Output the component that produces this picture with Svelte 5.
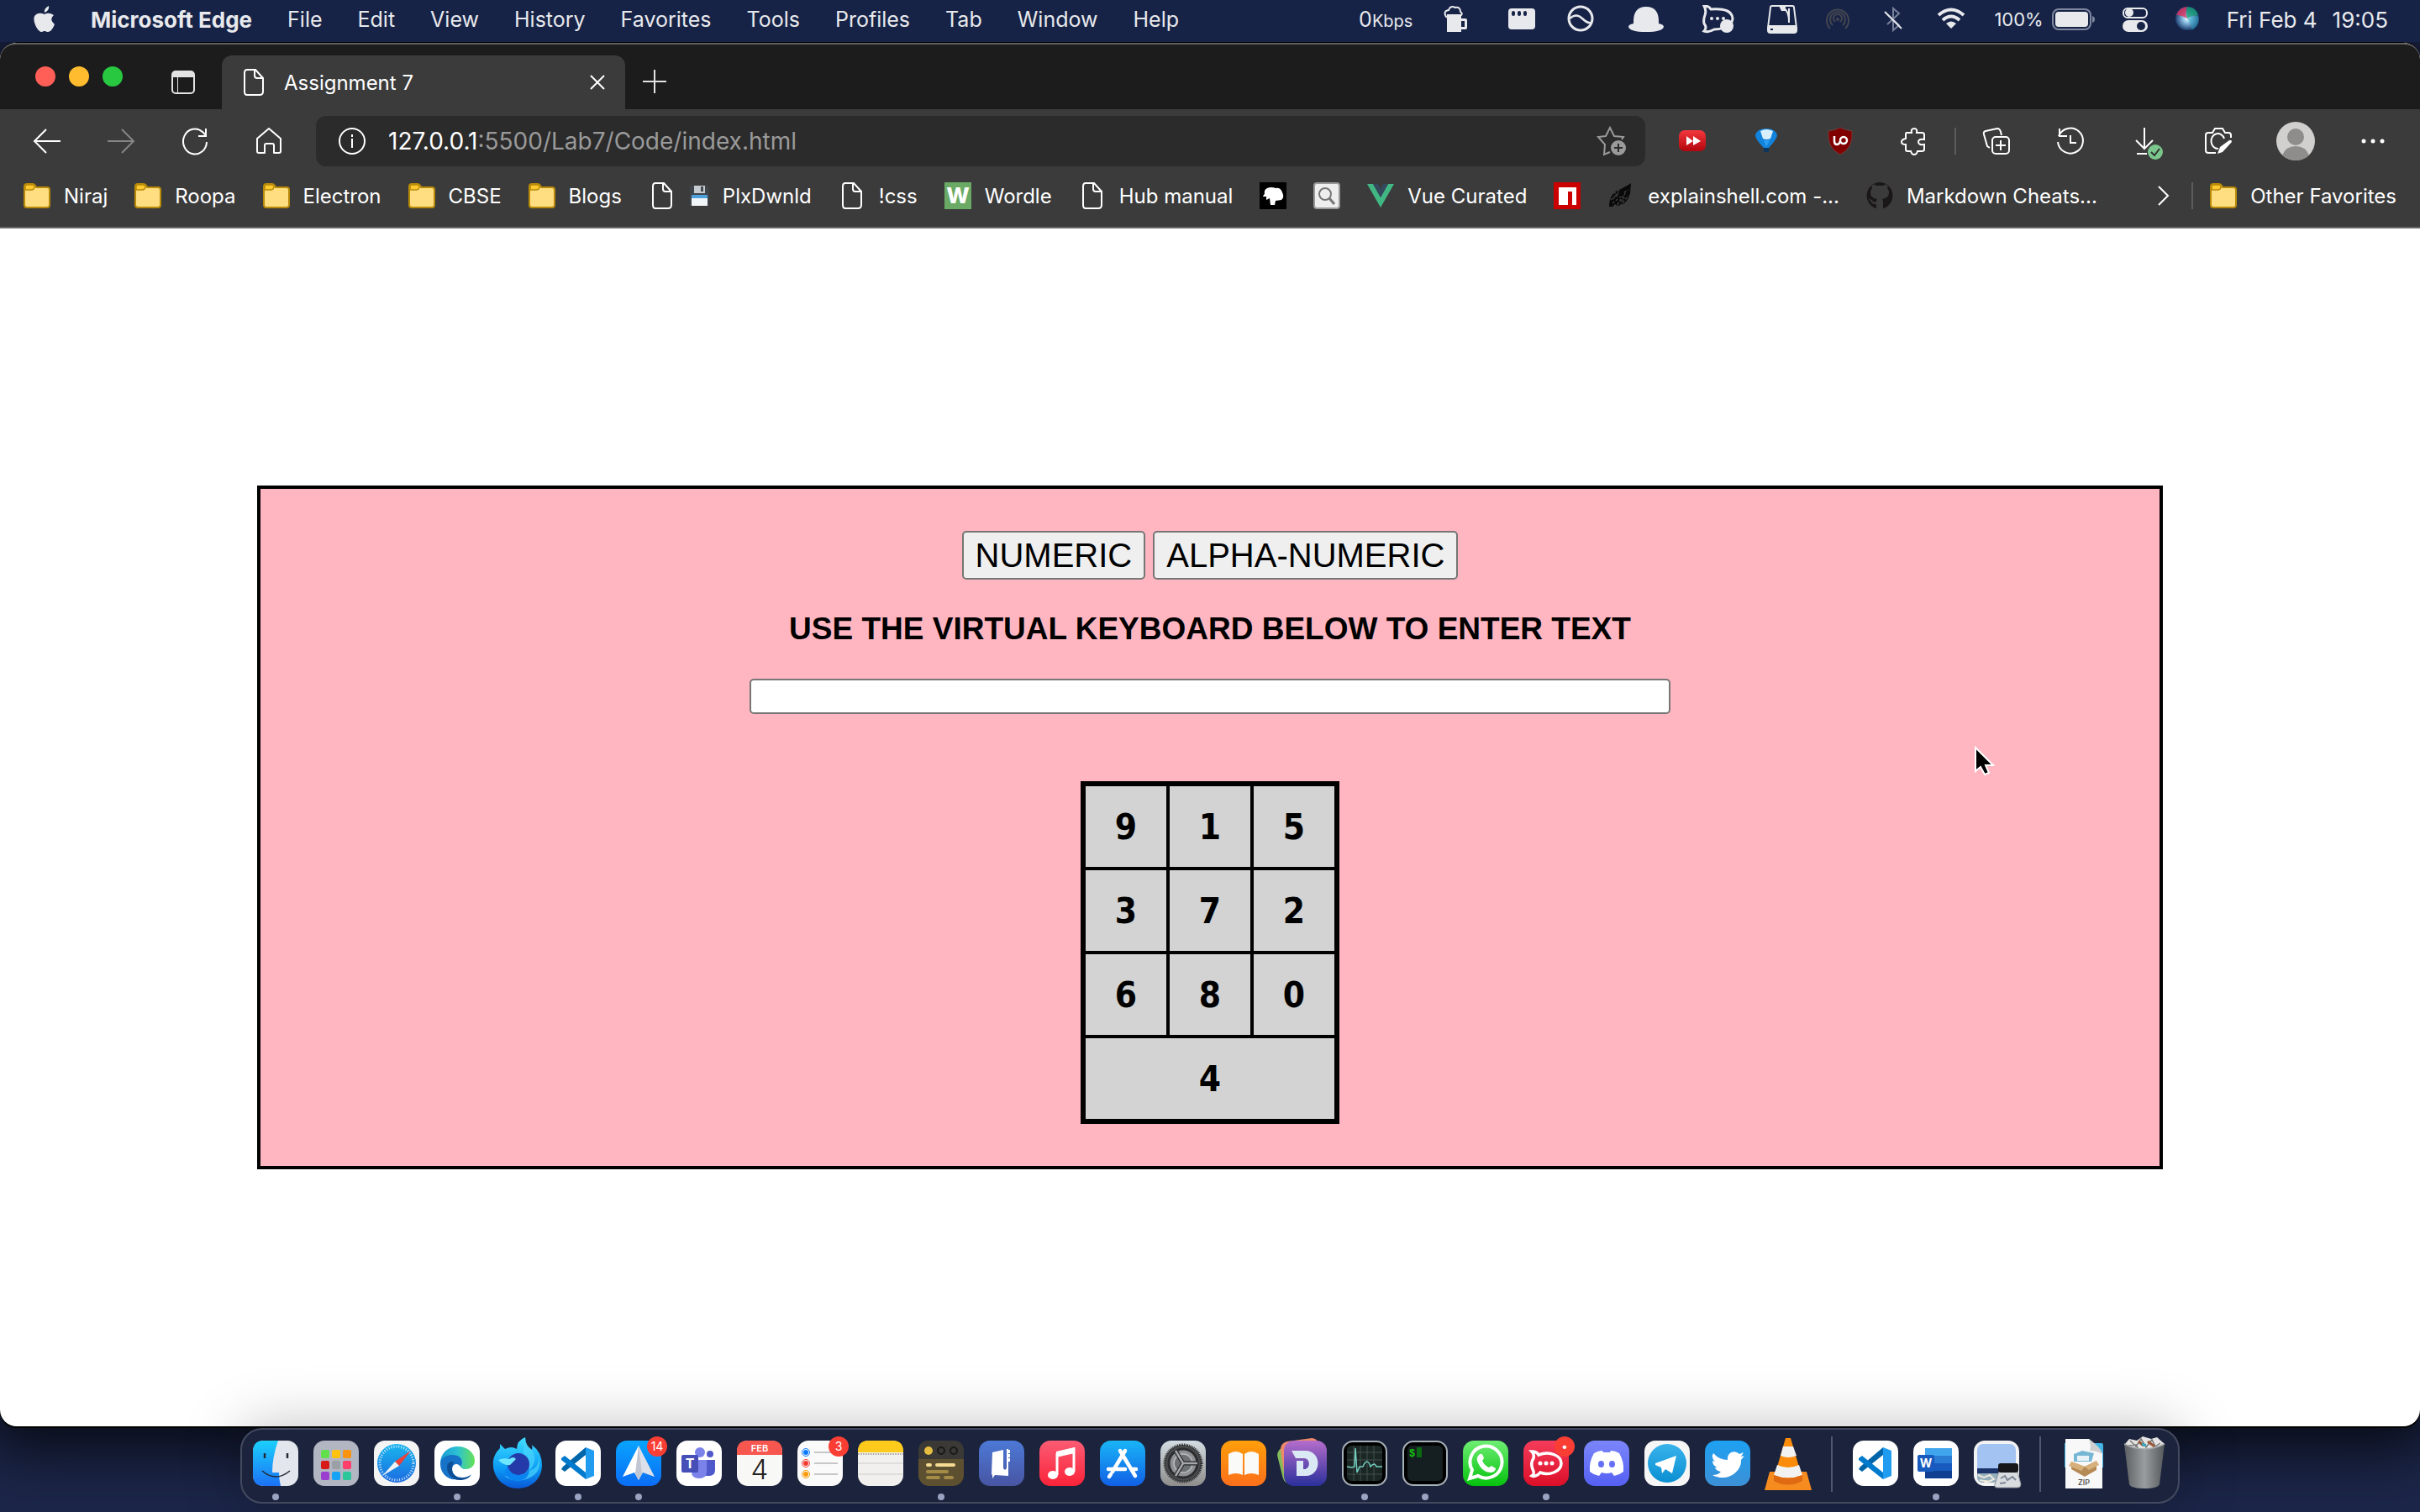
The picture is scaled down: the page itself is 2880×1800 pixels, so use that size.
<script>
  const menus = ['File', 'Edit', 'View', 'History', 'Favorites', 'Tools', 'Profiles', 'Tab', 'Window', 'Help'];

  const bookmarks = [
    { icon: 'folder', label: 'Niraj' },
    { icon: 'folder', label: 'Roopa' },
    { icon: 'folder', label: 'Electron' },
    { icon: 'folder', label: 'CBSE' },
    { icon: 'folder', label: 'Blogs' },
    { icon: 'page', label: 'PlxDwnld', floppy: true },
    { icon: 'page', label: '!css' },
    { icon: 'wordle', label: 'Wordle' },
    { icon: 'page', label: 'Hub manual' },
    { icon: 'head', label: '' },
    { icon: 'lens', label: '' },
    { icon: 'vue', label: 'Vue Curated' },
    { icon: 'npm', label: '' },
    { icon: 'shell', label: 'explainshell.com -...' },
    { icon: 'github', label: 'Markdown Cheats...' }
  ];

  const dock = [
    { app: 'finder', name: 'Finder', running: true },
    { app: 'launchpad', name: 'Launchpad' },
    { app: 'safari', name: 'Safari' },
    { app: 'edge', name: 'Microsoft Edge', running: true },
    { app: 'firefox', name: 'Firefox' },
    { app: 'code', name: 'Visual Studio Code', running: true },
    { app: 'spark', name: 'Spark', running: true, badge: '14' },
    { app: 'teams', name: 'Microsoft Teams' },
    { app: 'calendar', name: 'Calendar' },
    { app: 'reminders', name: 'Reminders', badge: '3' },
    { app: 'notes', name: 'Notes' },
    { app: 'cards', name: 'Cards', running: true },
    { app: 'archive', name: 'Archive' },
    { app: 'music', name: 'Music' },
    { app: 'store', name: 'App Store' },
    { app: 'settings', name: 'System Preferences' },
    { app: 'books', name: 'Books' },
    { app: 'dash', name: 'Dash' },
    { app: 'activity', name: 'Activity Monitor', running: true },
    { app: 'terminal', name: 'Terminal', running: true },
    { app: 'whatsapp', name: 'WhatsApp' },
    { app: 'rocket', name: 'Rocket.Chat', running: true, badge: '•' },
    { app: 'discord', name: 'Discord' },
    { app: 'telegram', name: 'Telegram' },
    { app: 'twitter', name: 'Twitter' },
    { app: 'vlc', name: 'VLC' },
    { divider: true },
    { app: 'code', name: 'Visual Studio Code' },
    { app: 'word', name: 'Microsoft Word', running: true },
    { app: 'preview', name: 'Preview' },
    { divider: true },
    { app: 'zip', name: 'Archive download' },
    { app: 'trash', name: 'Trash' }
  ];

  const rows = [['9', '1', '5'], ['3', '7', '2'], ['6', '8', '0'], ['4']];
  let entry = $state('');
</script>

{#snippet tile(fill)}
  <rect x="5" y="5" width="54" height="54" rx="13" {fill} />
{/snippet}

{#snippet favicon(kind)}
  <svg class="fav" viewBox="0 0 32 32" aria-hidden="true">
    {#if kind === 'folder'}
      <path d="M1 5q0-3 3-3h7q2 0 3 2l1 2h13q3 0 3 3v18q0 3-3 3H4q-3 0-3-3z" fill="#ffde82" stroke="#b88a08" stroke-width="2" />
      <path d="M2 5q0-2 2-2h7q2 0 2 2 0 4-4 4H2z" fill="#fcc931" stroke="#b88a08" stroke-width="1.500" />
    {:else if kind === 'page'}
      <path d="M8 1h10l9 10v16q0 4-4 4H8q-3 0-3-4V5q0-4 3-4zM17 1v7q0 3 3 3h7" fill="none" stroke="#fff" stroke-width="2" />
    {:else if kind === 'wordle'}
      <rect width="32" height="32" fill="#6aaa64" />
      <text x="16" y="25" text-anchor="middle" font-size="26" font-weight="800" fill="#fff">W</text>
    {:else if kind === 'head'}
      <rect width="32" height="32" fill="#000" />
      <path d="M4 17q1-3 2-3-1-5 3-7 5-2 10 0 6-1 8 5 3 6-1 9l-7 1-1 5h-5l-1-8-4 2v-4z" fill="#fff" />
    {:else if kind === 'lens'}
      <rect x="1" y="1" width="30" height="30" rx="3" fill="#eee" stroke="#999" stroke-width="2" />
      <circle cx="14" cy="14" r="7" fill="none" stroke="#777" stroke-width="2" />
      <path d="M19 19l6 7" stroke="#777" stroke-width="3" />
    {:else if kind === 'vue'}
      <path d="M0 2h7l9 16 9-16h7L16 30z" fill="#41b883" />
      <path d="M7 2h6l3 6 3-6h6l-9 16z" fill="#35495e" />
    {:else if kind === 'npm'}
      <rect width="32" height="32" fill="#cb0000" />
      <path d="M6 6h21v21h-5V11h-5v16H6z" fill="#fff" />
    {:else if kind === 'shell'}
      <path d="M2 29q0-17 14-21l9-5 3-2-1 12q-4 14-15 15l-3-2-3 3z" fill="#090909" />
      <path d="M3 16l12-7M4 21l10-9M6 20l8-6M6 25l10-8M12 27l7-12M18 25l3-13M20 12l5-3M10 14l3 3M8 29l12-10M15 28l10-12" stroke="#3b3b3b" stroke-width="1.500" stroke-dasharray="3 2" />
    {:else if kind === 'github'}
      <path d="M16 0a16 16 0 0 0-5 31c1 0 1 0 1-2v-3c-4 1-6-2-7-4-1-1-1-1-2-2 2-1 4 2 5 3 1 1 3 1 4 0 0-1 0-2 1-3-5-1-8-3-8-8 0-2 1-4 2-5-1-2 0-4 0-5 2 0 3 1 5 2h8c2-1 3-2 5-2 0 1 1 3 0 5 1 1 2 3 2 5 0 5-3 7-8 8 1 1 1 3 1 4v5c0 2 0 2 1 2A16 16 0 0 0 16 0z" fill="#1b1718" />
    {/if}
  </svg>
{/snippet}

{#snippet appIcon(kind)}
  <svg class="app-icon" viewBox="0 0 64 64" aria-hidden="true">
    {#if kind === 'finder'}
      {@render tile('#e3e6ec')}
      <path d="M18 5h17q-7 20-7 38h8q0 8 2 16H18Q5 59 5 46V18Q5 5 18 5z" fill="url(#g-finder)" />
      <path d="M19 20v6M46 20v6" stroke="#222c38" stroke-width="2.500" />
      <path d="M16 41q16 14 33 0" fill="none" stroke="#232b36" stroke-width="1.500" />
    {:else if kind === 'launchpad'}
      {@render tile('#b2b5c2')}
      {#each ['#61e04c', '#ffc20e', '#f99410', '#d71a18', '#9aa0a5', '#ff3f6a', '#9a3fd0', '#17a3f5', '#2bc79a'] as c, i}
        <rect x={14 + (i % 3) * 13} y={16 + Math.floor(i / 3) * 13} width="10" height="10" rx="2" fill={c} />
      {/each}
    {:else if kind === 'safari'}
      {@render tile('#f4f4f5')}
      <circle cx="32" cy="32" r="23" fill="url(#g-safari)" />
      <circle cx="32" cy="32" r="20" fill="none" stroke="#d6ebff" stroke-width="3" stroke-dasharray="1 2" />
      <path d="M49 17L35 35l-5-5z" fill="#ee4038" />
      <path d="M15 47l15-17 5 5z" fill="#f0f1f3" />
    {:else if kind === 'edge'}
      {@render tile('#fff')}
      <path d="M12 33C12 19 22 12 33 12c12 0 20 8 20 17 0 7-6 10-11 10-4 0-6-2-6-3s2-2 2-5c0-4-4-8-11-8-8 0-14 5-15 10z" fill="url(#g-edge)" />
      <path d="M12 33c0-7 7-11 14-11 8 0 12 4 12 9 0 2-1 4-2 5-2-3-5-4-8-2-4 4-2 13 8 16-13 5-24-5-24-17z" fill="#1673c7" />
      <path d="M26 39c0 7 6 10 12 10 5 0 9-2 11-4-3 6-9 7-14 7-9 0-15-8-15-15s6-8 8-6c-2 2-2 5-2 8z" fill="#0d4f96" />
    {:else if kind === 'firefox'}
      <path d="M3 29q1-8 8-15v-5l6 6q8-4 14 0Q31 5 41 1q0 10 8 15 1-3 0-6 12 9 12 24c0 17-13 28-29 28S1 49 3 29z" fill="url(#g-fox)" />
      <path d="M41 1q0 10 8 15 8 13-3 25 12-4 11-17 5 17-10 25-17 8-31-2 22 5 29-12-10-9-4-34z" fill="#48d4fb" opacity=".7" />
      <circle cx="33" cy="33" r="13" fill="#243aa8" />
      <path d="M9 28q6-3 13-1 5-4 8 0l-7 7q-8 1-14-6z" fill="#6ee6ff" />
      <path d="M20 35q3 12 14 11 10-1 12-10 1 16-14 17-12 0-15-11z" fill="#0a84f0" />
    {:else if kind === 'code'}
      {@render tile('#fff')}
      <path d="M12 39l4 3 25-20v-9L14 36z" fill="#0065a9" />
      <path d="M12 26l4-3 25 20v8L12 28z" fill="#007acc" />
      <path d="M41 13l10 4v30l-10 4z" fill="#1f9cf0" />
    {:else if kind === 'spark'}
      {@render tile('url(#g-blue)')}
      <path d="M32 11L13 48l14-5 5 9z" fill="#fff" />
      <path d="M32 11l19 37-14-5-5 9z" fill="#dbe0ea" />
      <path d="M32 11l-4 33 4 8 4-8z" fill="#c1c6d2" />
    {:else if kind === 'teams'}
      {@render tile('#fff')}
      <circle cx="33" cy="19" r="6" fill="#7b83eb" />
      <circle cx="45" cy="21" r="4" fill="#5059c9" />
      <path d="M38 28h13v12q0 7-7 7h-5z" fill="#5059c9" />
      <path d="M23 28h18v14q0 8-9 8t-9-8z" fill="#7b83eb" />
      <rect x="11" y="22" width="20" height="21" rx="2" fill="#464eb8" />
      <text x="21" y="38" text-anchor="middle" font-size="16" font-weight="700" fill="#fff">T</text>
    {:else if kind === 'calendar'}
      {@render tile('#f8f8f6')}
      <path d="M5 22v-4Q5 5 18 5h28q13 0 13 13v4z" fill="#f7574f" />
      <text x="32" y="18" text-anchor="middle" font-size="11" font-weight="600" fill="#fff">FEB</text>
      <text x="32" y="51" text-anchor="middle" font-size="33" font-weight="300" fill="#222">4</text>
    {:else if kind === 'reminders'}
      {@render tile('#fafafa')}
      {#each ['#0a7aff', '#f33b30', '#f99a07'] as c, i}
        <circle cx="15" cy={19 + i * 13} r="3" fill={c} />
        <circle cx="15" cy={19 + i * 13} r="4.500" fill="none" stroke={c} stroke-width="1" />
        <path d={`M25 ${19 + i * 13}h28`} stroke="#b6b6ba" stroke-width="1.500" />
      {/each}
    {:else if kind === 'notes'}
      {@render tile('#f1f0ee')}
      <path d="M5 19v-1Q5 5 18 5h28q13 0 13 13v1z" fill="#fecb1c" />
      <path d="M5 21h54" stroke="#aaa69d" stroke-width="2" stroke-dasharray="1 1" />
      <path d="M5 32h54M5 45h54" stroke="#ccc" />
    {:else if kind === 'cards'}
      {@render tile('#5c5031')}
      <path d="M5 27v-9Q5 5 18 5h28q13 0 13 13v9z" fill="#3a3936" />
      <circle cx="17" cy="17" r="5" fill="#e7bd41" />
      <circle cx="32" cy="17" r="4" fill="none" stroke="#191919" stroke-width="2" />
      <circle cx="47" cy="17" r="4" fill="none" stroke="#191919" stroke-width="2" />
      <path d="M16 34h3M27 34h20" stroke="#f4da92" stroke-width="4" stroke-linecap="round" />
      <path d="M16 42h23M16 49h13M37 49h8" stroke="#a48b46" stroke-width="4" stroke-linecap="round" />
    {:else if kind === 'archive'}
      {@render tile('url(#g-indigo)')}
      <path d="M21 19l13-3v22l2 2 2-2V15h2v32l-16-1-3 4v-4l-1-1z" fill="#fff" />
      <path d="M41 16v14" stroke="#fff" stroke-width="2" stroke-dasharray="4 1" />
    {:else if kind === 'music'}
      {@render tile('url(#g-red)')}
      <path d="M26 20l20-5v27M26 20v26" fill="none" stroke="#fff" stroke-width="3" />
      <path d="M25 18l22-5v7l-22 5z" fill="#fff" />
      <ellipse cx="21" cy="46" rx="6" ry="5" fill="#fff" />
      <ellipse cx="41" cy="42" rx="6" ry="5" fill="#fff" />
    {:else if kind === 'store'}
      {@render tile('url(#g-sky)')}
      <path d="M35 17L20 42M29 17l18 30M15 39h20M43 39h5M18 45l-2 3" stroke="#fff" stroke-width="4.500" stroke-linecap="round" />
    {:else if kind === 'settings'}
      {@render tile('url(#g-steel)')}
      <circle cx="32" cy="32" r="22" fill="#4a4c4e" stroke="#26282a" stroke-width="3" stroke-dasharray="1 1" />
      <circle cx="32" cy="32" r="17" fill="#8e9193" stroke="#2b2d2f" stroke-width="3" />
      <circle cx="32" cy="32" r="11" fill="#6e7173" stroke="#b7babc" stroke-width="1.500" />
      <path d="M32 32h17M32 32l-9-15M32 32l-9 15" stroke="#26282a" stroke-width="5" />
      <path d="M32 32h17M32 32l-9-15M32 32l-9 15" stroke="#a5a8aa" stroke-width="2.500" />
    {:else if kind === 'books'}
      {@render tile('url(#g-orange)')}
      <path d="M31 21q-8-6-17 0v25q9-4 17 0zM33 21q8-6 17 0v25q-9-4-17 0z" fill="#fafaf8" />
    {:else if kind === 'dash'}
      <rect x="3" y="10" width="40" height="44" rx="9" fill="#84bb5a" transform="rotate(-14 23 32)" />
      <rect x="6" y="4" width="46" height="48" rx="9" fill="#ee8a6b" transform="rotate(-8 28 28)" />
      <rect x="8" y="5" width="51" height="54" rx="12" fill="url(#g-purple)" />
      <path d="M17 17h16c21 0 20 30 1 30H23V29h8v10c9 1 9-13 1-13H22z" fill="#dbe9f5" />
    {:else if kind === 'activity'}
      <rect x="6" y="6" width="52" height="52" rx="12" fill="#000" stroke="#a7b1b8" stroke-width="2" />
      <rect x="11" y="11" width="42" height="42" rx="5" fill="#1b2725" />
      <path d="M19 11v42M27 11v42M35 11v42M43 11v42M11 19h42M11 28h42M11 45h42" stroke="#43504d" />
      <path d="M11 36l6 1 3-1 1-22 2 29 3-7h4q5-12 9 0 5-6 7 0h7" fill="none" stroke="#74cfc1" stroke-width="1.500" />
    {:else if kind === 'terminal'}
      <rect x="6" y="6" width="52" height="52" rx="12" fill="#000" stroke="#a7b1b8" stroke-width="2" />
      <rect x="11" y="11" width="42" height="42" rx="5" fill="#151e20" />
      <text x="13" y="24" class="mono" font-size="12" font-weight="700" fill="#16c60c">$</text>
      <path d="M22 13h6v12h-6z" fill="#0c6a14" />
    {:else if kind === 'whatsapp'}
      {@render tile('url(#g-green)')}
      <path d="M13 50l3-10a19 19 0 1 1 7 7z" fill="none" stroke="#fff" stroke-width="4" />
      <path d="M24 22q3-3 5 1l1 3-2 3q3 6 8 8l3-2 5 3q0 4-5 5-12 0-17-14-1-4 2-7z" fill="#fff" />
    {:else if kind === 'rocket'}
      {@render tile('url(#g-crimson)')}
      <path d="M15 18q6 0 8 4c14-5 27 1 27 10 0 10-14 15-25 11-3 4-8 5-10 4 4-3 2-5 1-8q-3-7 1-13 1-5-2-8z" fill="none" stroke="#fff" stroke-width="3.500" />
      <circle cx="25" cy="32" r="2.500" fill="#fff" /><circle cx="32" cy="32" r="2.500" fill="#fff" /><circle cx="39" cy="32" r="2.500" fill="#fff" />
    {:else if kind === 'discord'}
      {@render tile('url(#g-discord)')}
      <path d="M17 20q5-3 10-3l1 2h8l1-2q5 0 10 3 6 10 5 22-5 4-11 5l-3-4q-6 2-12 0l-3 4q-6-1-11-5-1-12 5-22z" fill="#fff" />
      <ellipse cx="25.500" cy="33" rx="3.500" ry="4" fill="#6670f4" /><ellipse cx="38.500" cy="33" rx="3.500" ry="4" fill="#6670f4" />
    {:else if kind === 'telegram'}
      {@render tile('#f6f6f6')}
      <circle cx="32" cy="32" r="23" fill="url(#g-tele)" />
      <path d="M18 32l25-9-5 21-8-5-4 5-1-7-7-3z" fill="#fff" />
    {:else if kind === 'twitter'}
      {@render tile('url(#g-tw)')}
      <path d="M15 20q7 8 17 8c-1-9 8-13 14-7l5-2-3 5 4-1-4 5c1 15-18 27-34 18q7 0 10-4-6-1-7-5h3q-6-2-6-8l3 1q-5-5-2-10z" fill="#fff" />
    {:else if kind === 'vlc'}
      <path d="M10 42h44l6 22H4z" fill="#f68b1f" />
      <path d="M29 2h6l14 48q-17 9-34 0z" fill="#fb8c0b" />
      <path d="M26 12h12l4 11q-10 4-19 0zM19 34q13 6 26 0l4 12q-17 7-34 0z" fill="#f2f2f2" />
      <path d="M15 46q17 7 34 0v7q-17 9-34 0z" fill="#e06a12" />
    {:else if kind === 'word'}
      {@render tile('#fff')}
      <path d="M19 14h32v9H19z" fill="#41a5ee" /><path d="M19 23h32v9H19z" fill="#2b7cd3" />
      <path d="M19 32h32v9H19z" fill="#185abd" /><path d="M19 41h32v9H19z" fill="#103f91" />
      <rect x="10" y="22" width="20" height="20" rx="2" fill="#185abd" />
      <text x="20" y="37" text-anchor="middle" font-size="14" font-weight="700" fill="#fff">W</text>
    {:else if kind === 'preview'}
      {@render tile('#f3f3f4')}
      <rect x="9" y="9" width="46" height="46" rx="7" fill="#a3c3f2" />
      <path d="M9 38h46v7H9z" fill="#1c3469" /><path d="M9 44h46v4q0 7-7 7H16q-7 0-7-7z" fill="#93aebc" />
      <path d="M10 46l7 3 7-3 5 5-7 3-10-2M17 54l9-1" fill="none" stroke="#eee8dd" stroke-width="2" />
      <path d="M35 42h22l4 15q0 4-4 4H33q-4 0-3-4z" fill="#d9dde0" stroke="#8d959b" />
      <path d="M37 50l5-3 3 5 6-4 4 4M36 56l7-1" fill="none" stroke="#7d8795" stroke-width="2" />
      <rect x="34" y="32" width="24" height="11" rx="3" fill="#15171a" />
    {:else if kind === 'zip'}
      <path d="M9 8h44q2 0 2 3v26H9z" fill="#43b4e6" />
      <path d="M10 3h28l16 17v42H10z" fill="#f8f8f8" /><path d="M38 3q3 8 1 14 8 0 15 4-1-7-16-18z" fill="#cfcfcf" />
      <path d="M20 21l10-4 14 3-3 10H20z" fill="#78b7d4" />
      <path d="M24 23h14v6H24z" fill="#e9f2f7" />
      <path d="M17 30l16 6 14-7v11l-14 8-16-9z" fill="#b58a55" /><path d="M33 36l14-7 3 5-12 6zM17 30l16 6-4 5-15-6z" fill="#d7b07b" />
      <text x="32" y="58" text-anchor="middle" font-size="9" font-weight="500" fill="#444">ZIP</text>
    {:else if kind === 'trash'}
      <path d="M9 9l5-6 9 2 7-5 10 3 7-2 9 8-4 8H12z" fill="#e5e4e3" />
      <path d="M15 5l7 7 6-9 6 10 7-9 4 8 6-4M13 11l9-1 3 5" stroke="#777" stroke-width="1.500" fill="none" />
      <path d="M25 6l6 5M36 6l8 6" stroke="#9a5738" stroke-width="3" /><path d="M29 9l5 2" stroke="#35a5b8" stroke-width="3" />
      <path d="M8 9q24 12 48 0l-6 48q-2 5-18 5t-18-5z" fill="url(#g-bin)" />
      <path d="M8 9q24 12 48 0" fill="none" stroke="#a5a8aa" stroke-width="1.500" />
    {/if}
  </svg>
{/snippet}

<svg class="defs" aria-hidden="true">
  <defs>
    <linearGradient id="g-finder" x2="0" y2="1"><stop stop-color="#1bd0fc" /><stop offset="1" stop-color="#1c72f6" /></linearGradient>
    <linearGradient id="g-safari" x2="0" y2="1"><stop stop-color="#19b6ee" /><stop offset="1" stop-color="#1c6be0" /></linearGradient>
    <linearGradient id="g-edge"><stop stop-color="#1798d4" /><stop offset=".5" stop-color="#2cc3d2" /><stop offset="1" stop-color="#66e055" /></linearGradient>
    <linearGradient id="g-fox" x2="0" y2="1"><stop stop-color="#3fe0ff" /><stop offset=".6" stop-color="#0b9cf5" /><stop offset="1" stop-color="#0a58d8" /></linearGradient>
    <linearGradient id="g-blue" x2="0" y2="1"><stop stop-color="#09a4ff" /><stop offset="1" stop-color="#0a6df5" /></linearGradient>
    <linearGradient id="g-indigo" x2="0" y2="1"><stop stop-color="#4c79d6" /><stop offset="1" stop-color="#4855a3" /></linearGradient>
    <linearGradient id="g-red" x2="0" y2="1"><stop stop-color="#fb5c74" /><stop offset="1" stop-color="#fa2339" /></linearGradient>
    <linearGradient id="g-sky" x2="0" y2="1"><stop stop-color="#19b5f7" /><stop offset="1" stop-color="#1160e6" /></linearGradient>
    <linearGradient id="g-steel" x2="0" y2="1"><stop stop-color="#d3dde3" /><stop offset="1" stop-color="#8e8d8b" /></linearGradient>
    <linearGradient id="g-orange" x2="0" y2="1"><stop stop-color="#ff9f0a" /><stop offset="1" stop-color="#fc6f1b" /></linearGradient>
    <linearGradient id="g-purple" x2="0" y2="1"><stop stop-color="#b56dcb" /><stop offset="1" stop-color="#2b309c" /></linearGradient>
    <linearGradient id="g-green" x2="0" y2="1"><stop stop-color="#6fee74" /><stop offset="1" stop-color="#05c20d" /></linearGradient>
    <linearGradient id="g-crimson" x2="0" y2="1"><stop stop-color="#f53c5b" /><stop offset="1" stop-color="#dc0f28" /></linearGradient>
    <linearGradient id="g-discord" x2="0" y2="1"><stop stop-color="#7b86fa" /><stop offset="1" stop-color="#5560f3" /></linearGradient>
    <linearGradient id="g-tele" x2="0" y2="1"><stop stop-color="#38b3ec" /><stop offset="1" stop-color="#0b8fd2" /></linearGradient>
    <linearGradient id="g-tw" x2="0" y2="1"><stop stop-color="#1da1f2" /><stop offset="1" stop-color="#3c90d6" /></linearGradient>
    <linearGradient id="g-bin"><stop stop-color="#5c5f61" /><stop offset=".5" stop-color="#9a9d9f" /><stop offset="1" stop-color="#55585a" /></linearGradient>
    <radialGradient id="g-siri"><stop stop-color="#f4fbff" /><stop offset=".35" stop-color="#8fc4e8" /><stop offset="1" stop-color="#1d3f70" /></radialGradient>
    <linearGradient id="g-tube" x2="0" y2="1"><stop stop-color="#f2383d" /><stop offset="1" stop-color="#b3050c" /></linearGradient>
  </defs>
</svg>

<div class="desktop">
  <header class="menubar">
    <nav class="menus" aria-label="Application menu">
      <svg class="apple" viewBox="0 0 26 32" aria-hidden="true">
        <path d="M18 0q1 5-5 8-1-5 5-8zM13 10q5-3 11 1-6 5 1 11-4 10-9 9-3-2-6 0C5 32-3 16 2 11q4-4 11-1z" fill="#e8e9ec" />
      </svg>
      <button class="menu current">Microsoft Edge</button>
      {#each menus as m}
        <button class="menu">{m}</button>
      {/each}
    </nav>
    <div class="status">
      <span class="speed">0<small>Kbps</small></span>
      <svg class="w44" viewBox="0 0 44 34"><path d="M9 11h17v5h5q2 0 2 2v9q0 2-2 2h-5v3H9zM26 19v7h4v-7z" fill-rule="evenodd" /><path d="M8 14q-4-7 3-8 2-6 8-3 6-1 6 5 3 2 1 4H12q0 3-4 2z" fill="none" stroke="#e8e9ec" stroke-width="2" /></svg>
      <svg class="w44" viewBox="0 0 44 34"><rect x="6" y="4" width="32" height="25" rx="4" /><path d="M12 9v2M19 9v2M26 9v2" stroke="#162347" stroke-width="4" stroke-linecap="round" /></svg>
      <svg class="w32" viewBox="0 0 32 34"><circle cx="16" cy="16" r="14" fill="none" stroke="#e8e9ec" stroke-width="3" /><path d="M3 16q8-7 15 0 6 6 11 5" fill="none" stroke="#e8e9ec" stroke-width="2.500" /></svg>
      <svg class="w60" viewBox="0 0 60 34"><path d="M15 22q-1-20 15-20t15 20q6 1 6 4-2 6-21 6T9 26q0-3 6-4z" /></svg>
      <svg class="w48" viewBox="0 0 48 34"><path d="M7 1q6 0 8 4 25-2 26 11-1 12-22 13-7 4-12 2 4-4 0-9-1-5 1-10 2-5-1-11z" fill="none" stroke="#e8e9ec" stroke-width="3" /><circle cx="16" cy="16" r="2" /><circle cx="23" cy="16" r="2" /><circle cx="30" cy="16" r="2" /><circle cx="34" cy="25" r="8" /></svg>
      <svg class="w40" viewBox="0 0 40 34"><path d="M8 1h24q2 0 2 2l3 24v3q0 3-3 3H6q-3 0-3-3v-3L6 3q0-2 2-2z" fill="none" stroke="#e8e9ec" stroke-width="2" /><path d="M3 24h34v6q0 3-3 3H6q-3 0-3-3zM16 1h8v6h-5z" /><path d="M22 4q6 3 6 16M28 4v17" stroke="#e8e9ec" stroke-width="2" fill="none" /><path d="M6 29h3" stroke="#162347" stroke-width="2" /></svg>
      <svg class="w28" viewBox="0 0 28 34"><path d="M5 28a13 13 0 1 1 18 0M8 24a9 9 0 1 1 12 0M11 20a5 5 0 1 1 6 0" fill="none" stroke="#43464f" stroke-width="2" /><circle cx="14" cy="17" r="2" fill="#43464f" /></svg>
      <svg class="w40" viewBox="0 0 40 34"><path d="M13 11l14 13-7 6V4l7 6-14 13" fill="none" stroke="#77809a" stroke-width="2" /><path d="M10 8l20 20" stroke="#e8e9ec" stroke-width="2" /></svg>
      <svg class="w36" viewBox="0 0 36 34"><path d="M2 12q15-13 30 0M7 18q10-9 20 0" fill="none" stroke="#e8e9ec" stroke-width="4" /><path d="M11 22q6-5 12 0l-6 6z" /></svg>
      <span class="battery">
        100%
        <svg viewBox="0 0 52 26"><rect x="1" y="1" width="45" height="24" rx="7" fill="none" stroke="#8088a0" stroke-width="2" /><rect x="4" y="4" width="39" height="18" rx="4" /><path d="M48 9q3 1 3 4t-3 4z" fill="#8088a0" /></svg>
      </span>
      <svg class="w30" viewBox="0 0 30 34"><rect x="1" y="4" width="28" height="11" rx="5" fill="none" stroke="#e8e9ec" stroke-width="2" /><circle cx="8" cy="9" r="5" /><rect y="18" width="30" height="14" rx="7" /><circle cx="22" cy="25" r="5" fill="#162347" /></svg>
      <svg class="w30" viewBox="0 0 30 34"><circle cx="15" cy="16" r="14" fill="url(#g-siri)" /><path d="M2 12Q6 2 15 2q-3 8 0 14-7-4-13-4z" fill="#e0305f" opacity=".8" /><path d="M15 2q10 0 13 10-7 0-13 4-2-7 0-14z" fill="#139a72" opacity=".8" /><path d="M28 13q3 12-8 17 0-8-5-14 6-4 13-3z" fill="#2b9fc0" opacity=".5" /></svg>
      <time class="clock"><span>Fri Feb 4</span><span>19:05</span></time>
    </div>
  </header>

  <main class="window">
    <div class="tabstrip">
      <div class="lights">
        <button class="light red" aria-label="Close window"></button>
        <button class="light amber" aria-label="Minimise window"></button>
        <button class="light green" aria-label="Zoom window"></button>
      </div>
      <button class="side" aria-label="Vertical tabs">
        <svg viewBox="0 0 28 28"><rect x="1" y="1" width="26" height="26" rx="4" fill="none" stroke="#e3e3e3" stroke-width="2" /><path d="M1 8V5q0-4 4-4h18q4 0 4 4v3zM7 8h1v19H7z" fill="#e3e3e3" /></svg>
      </button>
      <div class="tab">
        {@render favicon('page')}
        <span class="tab-title">Assignment 7</span>
        <button class="tab-close" aria-label="Close tab"><svg viewBox="0 0 18 18"><path d="M1 1l16 16M17 1L1 17" stroke="#fff" stroke-width="2" /></svg></button>
      </div>
      <button class="new-tab" aria-label="New tab"><svg viewBox="0 0 28 28"><path d="M14 0v28M0 14h28" stroke="#e3e3e3" stroke-width="2" /></svg></button>
    </div>

    <div class="toolbar">
      <div class="tools">
        <button class="tool" aria-label="Back"><svg viewBox="0 0 32 32"><path d="M32 16H1M15 2L1 16l14 14" fill="none" stroke="#fff" stroke-width="2" /></svg></button>
        <button class="tool" aria-label="Forward"><svg viewBox="0 0 32 32"><path d="M0 16h31M17 2l14 14-14 14" fill="none" stroke="#858585" stroke-width="2" /></svg></button>
        <button class="tool" aria-label="Refresh"><svg viewBox="0 0 32 32"><path d="M30 17a14 15 0 1 1-5-12l4 4M29 1v9h-9" fill="none" stroke="#fff" stroke-width="2" /></svg></button>
        <button class="tool" aria-label="Home"><svg viewBox="0 0 32 32"><path d="M2 13L16 1l14 12v15q0 2-2 2h-6v-9q0-2-2-2h-7q-2 0-2 2v9H4q-2 0-2-2z" fill="none" stroke="#fff" stroke-width="2" stroke-linejoin="round" /></svg></button>
      </div>
      <div class="address">
        <svg class="info" viewBox="0 0 34 34" aria-hidden="true"><circle cx="17" cy="17" r="15" fill="none" stroke="#fff" stroke-width="2" /><path d="M17 14v11M17 9v3" stroke="#fff" stroke-width="2" /></svg>
        <div class="url" role="textbox" tabindex="0" contenteditable="true" aria-label="Address"><b>127.0.0.1</b>:5500/Lab7/Code/index.html</div>
        <button class="star" aria-label="Add to favorites"><svg viewBox="0 0 36 36"><path d="M16 31l-7 3 1-12-8-9 9-1 5-10 5 10 11 1-2 3" fill="none" stroke="#9a9a9a" stroke-width="2" /><circle cx="26" cy="26" r="9" fill="#9a9a9a" /><path d="M26 21v10M21 26h10" stroke="#2b2b2b" stroke-width="2" /></svg></button>
      </div>
      <div class="tools">
        <button class="tool" aria-label="Playback"><svg viewBox="0 0 32 32"><rect y="3" width="32" height="25" rx="7" fill="url(#g-tube)" /><path d="M9 10l8 6v-6l9 6-9 5v-5l-8 5z" fill="#fff" /></svg></button>
        <button class="tool" aria-label="Balloon"><svg viewBox="0 0 32 32"><path d="M3 9Q5 1 16 1t13 8q0 4-10 15v5h-6v-5Q3 14 3 9z" fill="#1283dc" /><path d="M9 4q7-4 15 0l-3 9q-5 2-9 0z" fill="#d9efff" /><path d="M13 15l3 8 4-8z" fill="#2f9df0" /><path d="M13 24h6v5h-6z" fill="#09355e" /></svg></button>
        <button class="tool" aria-label="Content blocker"><svg viewBox="0 0 32 32"><path d="M16 0q6 3 14 4 2 20-14 28Q0 24 2 4q8-1 14-4z" fill="#800000" stroke="#8f5a5a" stroke-width=".500" /><path d="M9 10v6q0 4 3 4t4-4" fill="none" stroke="#fff" stroke-width="2.500" /><circle cx="20" cy="15" r="4" fill="none" stroke="#fff" stroke-width="2.500" /></svg></button>
        <button class="tool" aria-label="Extensions"><svg viewBox="0 0 32 32"><path d="M7 6h6q-1-5 3-5t3 5h6q3 0 3 2v6q-7-1-7 3t7 3v6q0 2-3 2h-5q-1 4-4 4t-4-4H8q-2 0-2-2v-6q-5 0-5-3t5-4V8q0-2 1-2z" fill="none" stroke="#fff" stroke-width="2" /></svg></button>
      </div>
      <span class="rule"></span>
      <div class="tools">
        <button class="tool" aria-label="Collections"><svg viewBox="0 0 32 32"><path d="M8 24l-3-2L1 8q-1-3 2-4l14-3q3 0 4 4l1 4" fill="none" stroke="#fff" stroke-width="2" /><rect x="11" y="11" width="20" height="20" rx="4" fill="none" stroke="#fff" stroke-width="2" /><path d="M21 15v12M15 21h12" stroke="#fff" stroke-width="2" /></svg></button>
        <button class="tool" aria-label="History"><svg viewBox="0 0 32 32"><path d="M2 10a15 15 0 1 1-1 7M3 1v9h9M16 9v9h7" fill="none" stroke="#fff" stroke-width="2" /></svg></button>
        <button class="tool" aria-label="Downloads"><svg viewBox="0 0 32 32"><path d="M16 0v25M6 15l10 10 10-10M7 31h12" fill="none" stroke="#fff" stroke-width="2" /><circle cx="29" cy="29" r="9" fill="#7ac68d" /><path d="M24 29l4 4 6-8" fill="none" stroke="#303030" stroke-width="2" /></svg></button>
        <button class="tool" aria-label="Web capture"><svg viewBox="0 0 32 32"><path d="M13 30H4q-3 0-3-3V9q0-3 3-3h5l3-5h9l3 5h4q3 0 3 3v3M16 25a8 9 0 1 1 7-12" fill="none" stroke="#fff" stroke-width="2" /><path d="M15 31l3-8 11-8q3-1 3 2L21 29z" fill="#fff" /></svg></button>
        <button class="tool profile" aria-label="Profile"><svg viewBox="0 0 46 46"><circle cx="23" cy="23" r="23" fill="#d2d0ce" /><circle cx="23" cy="18" r="10" fill="#8f8d8b" /><path d="M7 40q4-11 16-11t16 11q-7 6-16 6T7 40z" fill="#8f8d8b" /></svg></button>
        <button class="tool" aria-label="Settings and more"><svg viewBox="0 0 32 32"><circle cx="5" cy="16" r="2.500" fill="#fff" /><circle cx="16" cy="16" r="2.500" fill="#fff" /><circle cx="27" cy="16" r="2.500" fill="#fff" /></svg></button>
      </div>
    </div>

    <nav class="bookmarks" aria-label="Favorites bar">
      {#each bookmarks as b}
        <a class="bookmark" href="#top" aria-label={b.label || b.icon}>
          {@render favicon(b.icon)}
          {#if b.floppy}
            <svg class="floppy" viewBox="0 0 24 24" aria-hidden="true"><path d="M1 0h21l2 3v21H1z" fill="#3f444a" /><path d="M6 0h13v9H6z" fill="#c6cbd0" /><path d="M14 1h3v6h-3z" fill="#454a50" /><path d="M3 11h19v13H3z" fill="#f2f5f8" /><path d="M3 11h19v4H3z" fill="#4ea2dc" /></svg>
          {/if}
          {#if b.label}<span>{b.label}</span>{/if}
        </a>
      {/each}
      <button class="more" aria-label="More favorites"><svg viewBox="0 0 14 24"><path d="M1 1l11 11L1 23" fill="none" stroke="#fff" stroke-width="2" /></svg></button>
      <span class="rule"></span>
      <a class="bookmark" href="#top">{@render favicon('folder')}<span>Other Favorites</span></a>
    </nav>

    <section class="page" id="top">
      <div class="panel">
        <div class="modes">
          <button>NUMERIC</button>
          <button>ALPHA-NUMERIC</button>
        </div>
        <h1><label for="entry">USE THE VIRTUAL KEYBOARD BELOW TO ENTER TEXT</label></h1>
        <input id="entry" type="text" bind:value={entry} />
        <table>
          <tbody>
            {#each rows as row}
              <tr>
                {#each row as key}
                  <td colspan={row.length === 1 ? 3 : 1}><button class="key" onclick={() => (entry += key)}>{key}</button></td>
                {/each}
              </tr>
            {/each}
          </tbody>
        </table>
      </div>
    </section>
  </main>

  <footer class="dock-area">
    <div class="dock">
      {#each dock as d}
        {#if d.divider}
          <span class="dock-rule"></span>
        {:else}
          <button class="dock-item" aria-label={d.name}>
            {@render appIcon(d.app)}
            <span class="dot" class:on={d.running}></span>
            {#if d.badge}<span class="badge">{d.badge}</span>{/if}
          </button>
        {/if}
      {/each}
    </div>
  </footer>

  <svg class="cursor" viewBox="0 0 24 36" aria-hidden="true"><path d="M1 2v28l6-5 5 9 5-2-4-9h9z" fill="#000" stroke="#fff" stroke-width="2" /></svg>
</div>

<style>
  :global(body) { margin: 0; background: #162347; }
  .desktop {
    position: relative;
    min-height: 100vh;
    display: flex;
    flex-direction: column;
    background: #1c2649;
    font-family: Inter, "Liberation Sans", sans-serif;
    color: #fff;
  }
  button, input { font: inherit; color: inherit; }
  button { border: 0; padding: 0; background: none; }
  svg { display: block; flex: none; }
  .defs { position: absolute; width: 0; height: 0; }

  .menubar {
    position: relative;
    z-index: 1;
    height: 50px;
    display: flex;
    align-items: center;
    justify-content: space-between;
    padding: 0 38px 4px 40px;
    box-sizing: border-box;
    background: #162347;
    color: #e8e9ec;
    font-size: 25px;
    white-space: nowrap;
  }
  .menus { display: flex; align-items: center; gap: 42px; }
  .apple { width: 26px; height: 32px; }
  .menu.current { font-size: 26px; font-weight: 700; }
  .status { display: flex; align-items: center; gap: 32px; fill: #e8e9ec; }
  .status svg { height: 34px; }
  .speed small { font-size: 20px; }
  .w28 { width: 28px; }
  .w30 { width: 30px; }
  .w32 { width: 32px; }
  .w36 { width: 36px; }
  .w40 { width: 40px; }
  .w44 { width: 44px; }
  .w48 { width: 48px; }
  .w60 { width: 60px; }
  .battery { display: flex; align-items: center; gap: 10px; font-size: 22px; }
  .status .battery svg { width: 52px; height: 26px; }
  .clock { display: flex; gap: 18px; font-size: 26px; }

  .window {
    flex: 1;
    display: flex;
    flex-direction: column;
    border-radius: 20px;
    overflow: hidden;
    background: #fff;
    border-top: 1px solid #000;
    box-shadow: 0 2px 0 #000, 0 10px 70px 20px rgba(0, 0, 0, 0.7);
  }
  .tabstrip {
    height: 79px;
    box-sizing: border-box;
    display: flex;
    align-items: flex-end;
    padding-left: 42px;
    background: #1c1c1c;
    border-top: 2px solid #5f5f5f;
    border-radius: 19px 19px 0 0;
  }
  .lights { display: flex; gap: 16px; padding-bottom: 27px; }
  .light { width: 24px; height: 24px; border-radius: 50%; }
  .red { background: #ff5f57; }
  .amber { background: #febc2e; }
  .green { background: #28c840; }
  .side { margin: 0 32px 18px 58px; }
  .side svg { width: 28px; height: 28px; }
  .tab {
    width: 480px;
    height: 64px;
    box-sizing: border-box;
    display: flex;
    align-items: center;
    padding: 0 24px 0 22px;
    background: #3b3b3b;
    border-radius: 12px 12px 0 0;
    font-size: 24px;
  }
  .tab-title { flex: 1; padding-left: 20px; }
  .tab-close svg { width: 18px; height: 18px; }
  .new-tab { margin: 0 0 19px 21px; }
  .new-tab svg { width: 28px; height: 28px; }

  .toolbar {
    height: 76px;
    box-sizing: border-box;
    display: flex;
    align-items: center;
    padding: 0 12px;
    background: #3b3b3b;
  }
  .tools { display: flex; align-items: center; }
  .tool { width: 88px; height: 60px; display: grid; place-items: center; }
  .tool svg { width: 32px; height: 32px; overflow: visible; }
  .tools .profile { width: 96px; }
  .profile svg { width: 46px; height: 46px; }
  .address {
    flex: 1;
    height: 60px;
    display: flex;
    align-items: center;
    margin: 0 12px;
    padding: 0 22px 0 26px;
    box-sizing: border-box;
    border-radius: 12px;
    background: #2b2b2b;
  }
  .info { width: 34px; height: 34px; }
  .url { flex: 1; margin-left: 26px; font-size: 28px; color: #9a9a9a; white-space: nowrap; }
  .url b { font-weight: 400; color: #fff; }
  .star svg { width: 36px; height: 36px; }
  .rule { width: 2px; height: 32px; background: #5c5c5c; flex: none; }
  .toolbar .rule { margin: 0 4px; }

  .bookmarks {
    height: 66px;
    box-sizing: border-box;
    display: flex;
    align-items: center;
    gap: 32px;
    padding: 0 28px 10px;
    background: #3b3b3b;
    border-bottom: 2px solid #666;
    font-size: 24px;
    white-space: nowrap;
  }
  .bookmark { display: flex; align-items: center; gap: 16px; color: #fff; text-decoration: none; }
  .fav { width: 32px; height: 32px; }
  .floppy { width: 24px; height: 24px; }
  .more { margin-left: auto; }
  .more svg { width: 14px; height: 24px; }
  .bookmarks .rule { margin: 0 -12px 0 -6px; }

  .page {
    flex: 1;
    display: grid;
    place-items: center;
    font-family: "Liberation Sans", Arial, sans-serif;
    color: #000;
  }
  .panel {
    width: 78.75%;
    box-sizing: border-box;
    display: flex;
    flex-direction: column;
    align-items: center;
    padding: 50px 0;
    border: 4px solid #000;
    background: #ffb6c1;
  }
  .modes { display: flex; gap: 9px; font-size: 40px; line-height: 46px; }
  .modes button { padding: 4px 14px; border: 2px solid #767676; border-radius: 5px; background: #efefef; }
  h1 { margin: 36px 0; font-size: 37px; line-height: 46px; font-weight: 700; }
  input {
    width: 1096px;
    max-width: 90%;
    height: 42px;
    box-sizing: border-box;
    padding: 0 4px;
    border: 2px solid #767676;
    border-radius: 5px;
    background: #fff;
  }
  table { margin-top: 80px; border: 2px solid #000; border-spacing: 4px; background: #000; }
  td { padding: 0; background: #d3d3d3; }
  .key {
    width: 100%;
    min-width: 96px;
    height: 96px;
    display: block;
    font-family: "DejaVu Sans Condensed", "DejaVu Sans", sans-serif;
    font-size: 42px;
    font-weight: 700;
  }

  .dock-area { position: relative; display: flex; justify-content: center; padding: 2px 0 10px; }
  .dock {
    display: flex;
    padding: 8px 4px 2px;
    border: 2px solid #434a5f;
    border-radius: 26px;
    background: #1c233c;
    box-shadow: 0 0 70px rgba(0, 0, 0, 0.26);
  }
  .dock-item { position: relative; width: 72px; display: flex; flex-direction: column; align-items: center; gap: 4px; }
  .app-icon { width: 64px; height: 64px; overflow: visible; }
  .mono { font-family: "Liberation Mono", monospace; }
  .dot { width: 8px; height: 8px; border-radius: 50%; }
  .dot.on { background: #9aa3c2; }
  .badge {
    position: absolute;
    top: 0;
    right: 2px;
    width: 24px;
    height: 24px;
    border-radius: 50%;
    background: #fb3e34;
    color: #fff;
    font-size: 14px;
    line-height: 24px;
    text-align: center;
  }
  .dock-rule { width: 2px; height: 66px; margin: 0 15px; background: #50566c; }
  .cursor { position: absolute; left: 81.600%; top: 888px; width: 24px; height: 36px; }
</style>
